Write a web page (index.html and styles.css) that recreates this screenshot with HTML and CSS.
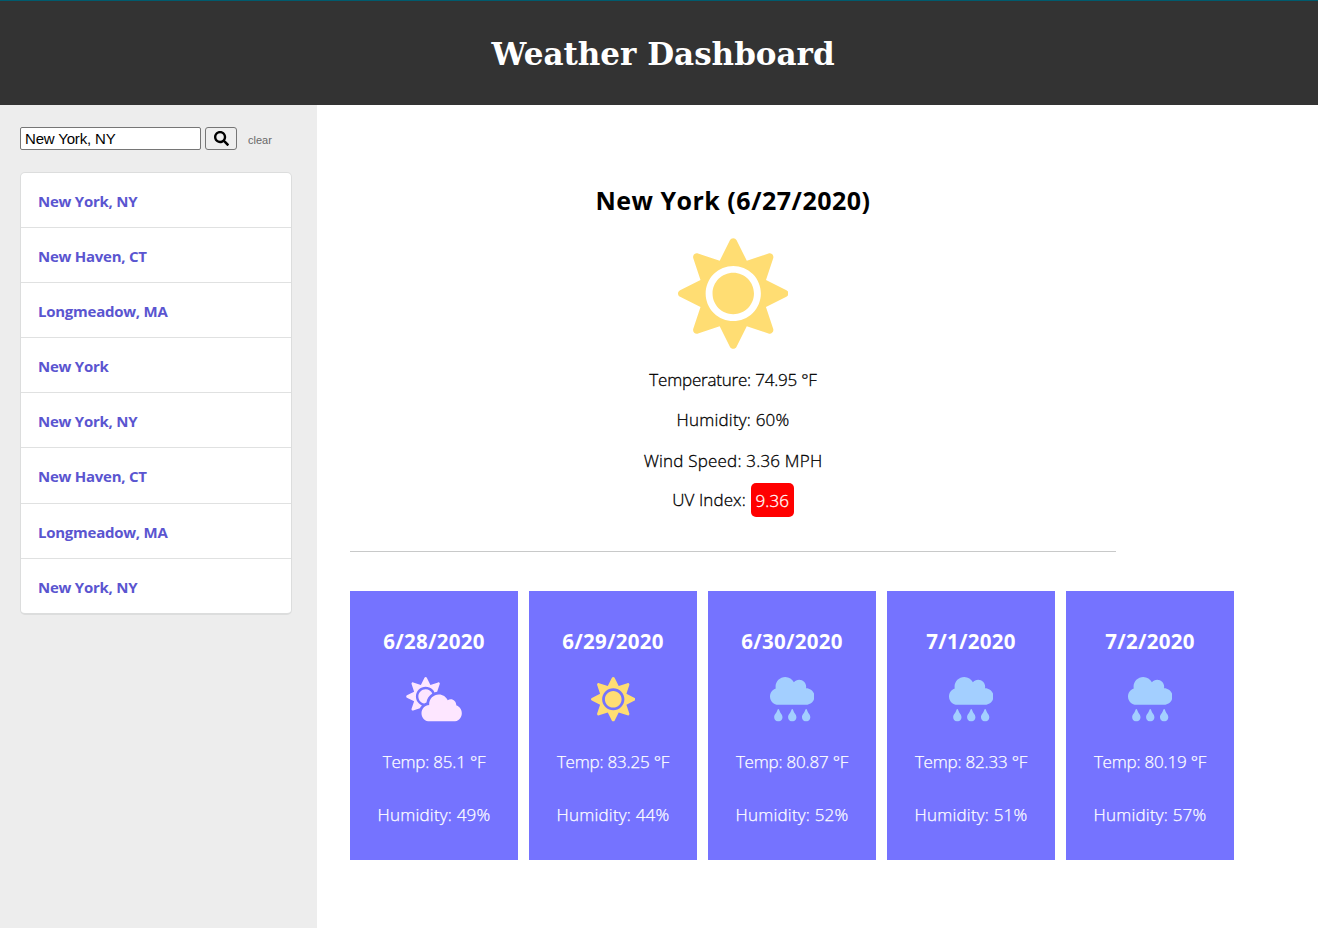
FILE: index.html
```html
<!DOCTYPE html>
<html lang="en">
<head>
<meta charset="utf-8">
<title>Weather Dashboard</title>
<link rel="stylesheet" href="styles.css">
</head>
<body>
<svg class="sprites" aria-hidden="true">
  <symbol id="sun" viewBox="0 0 512 512"><path d="M256 160c-52.9 0-96 43.1-96 96s43.1 96 96 96 96-43.1 96-96-43.1-96-96-96zm246.4 80.5l-94.7-47.3 33.5-100.4c4.5-13.6-8.4-26.5-21.9-21.9l-100.4 33.5-47.4-94.8c-6.4-12.8-24.6-12.8-31 0l-47.3 94.7L92.7 70.8c-13.6-4.5-26.5 8.4-21.9 21.9l33.5 100.4-94.7 47.4c-12.8 6.4-12.8 24.6 0 31l94.7 47.3-33.5 100.5c-4.5 13.6 8.4 26.5 21.9 21.9l100.4-33.5 47.3 94.7c6.4 12.8 24.6 12.8 31 0l47.3-94.7 100.4 33.5c13.6 4.5 26.5-8.4 21.9-21.9l-33.5-100.4 94.7-47.3c13-6.5 13-24.7.2-31.1zm-155.9 106c-49.9 49.9-131.1 49.9-181 0-49.9-49.9-49.9-131.1 0-181 49.9-49.9 131.1-49.9 181 0 49.9 49.9 49.9 131.1 0 181z"/></symbol>
  <symbol id="cloud-sun" viewBox="0 0 640 512"><path d="M575.2 325.7c.2-1.9.8-3.7.8-5.6 0-35.3-28.7-64-64-64-12.6 0-24.2 3.8-34.1 10-17.6-38.8-56.5-66-101.9-66-61.8 0-112 50.1-112 112 0 3 .7 5.8.9 8.7-49.6 3.7-88.9 44.7-88.9 95.3 0 53 43 96 96 96h272c53 0 96-43 96-96 0-42.1-27.2-77.4-64.8-90.4zm-430.4-22.6c-43.7-43.7-43.7-114.7 0-158.3 43.7-43.7 114.7-43.7 158.4 0 9.7 9.7 16.9 20.9 22.3 32.7 9.8-3.7 20.1-6 30.7-7.5L386 81.1c4-11.9-7.3-23.1-19.2-19.2L279 91.2 237.5 8.4C232-2.8 216-2.8 210.4 8.4L169 91.2 81.1 61.9C69.3 58 58 69.3 61.9 81.1l29.3 87.8-82.8 41.5c-11.2 5.6-11.2 21.5 0 27.1l82.8 41.4-29.3 87.8c-4 11.9 7.3 23.1 19.2 19.2l76.1-25.3c6.1-12.4 14-23.7 23.6-33.5-13.1-5.4-25.4-13.4-36-24zm-4.8-79.2c0 40.8 29.3 74.8 67.9 82.3 8-4.7 16.3-8.8 25.2-11.7 5.4-44.3 31-82.5 67.4-105C287.3 160.4 258 140 224 140c-46.3 0-84 37.6-84 83.9z"/></symbol>
  <symbol id="rain" viewBox="0 0 512 512"><path d="M416 128c-.6 0-1.1.2-1.6.2 1.1-5.2 1.6-10.6 1.6-16.2 0-44.2-35.8-80-80-80-24.6 0-46.3 11.3-61 28.8C256.4 24.8 219.3 0 176 0 114.1 0 64 50.1 64 112c0 7.3.8 14.3 2.1 21.2C27.8 145.8 0 181.5 0 224c0 53 43 96 96 96h320c53 0 96-43 96-96s-43-96-96-96zM88 374.2c-12.8 44.4-40 56.4-40 87.7 0 27.7 21.5 50.1 48 50.1s48-22.4 48-50.1c0-31.4-27.2-43.1-40-87.7-2.2-8.1-13.5-8.5-16 0zm160 0c-12.8 44.4-40 56.4-40 87.7 0 27.7 21.5 50.1 48 50.1s48-22.4 48-50.1c0-31.4-27.2-43.1-40-87.7-2.2-8.1-13.5-8.5-16 0zm160 0c-12.8 44.4-40 56.4-40 87.7 0 27.7 21.5 50.1 48 50.1s48-22.4 48-50.1c0-31.4-27.2-43.1-40-87.7-2.2-8.1-13.5-8.5-16 0z"/></symbol>
</svg>
<header class="banner"><h1 class="title">Weather Dashboard</h1></header>
<div class="page">
  <aside class="sidebar">
    <form class="search">
      <input class="field" type="text" value="New York, NY" spellcheck="false">
      <button class="go" type="button"><svg class="glass" viewBox="0 0 512 512"><path d="M505 442.7L405.3 343c-4.500-4.500-10.600-7-17-7H372c27.600-35.300 44-79.700 44-128C416 93.100 322.900 0 208 0S0 93.100 0 208s93.100 208 208 208c48.300 0 92.700-16.400 128-44v16.300c0 6.400 2.500 12.500 7 17l99.700 99.700c9.400 9.400 24.600 9.400 33.900 0l28.300-28.300c9.400-9.400 9.400-24.600.1-34zM208 336c-70.700 0-128-57.200-128-128 0-70.700 57.200-128 128-128 70.700 0 128 57.200 128 128 0 70.700-57.200 128-128 128z"/></svg></button>
      <button class="clear" type="button">clear</button>
    </form>
    <ul class="history">
      <li class="place">New York, NY</li>
      <li class="place">New Haven, CT</li>
      <li class="place">Longmeadow, MA</li>
      <li class="place">New York</li>
      <li class="place">New York, NY</li>
      <li class="place">New Haven, CT</li>
      <li class="place">Longmeadow, MA</li>
      <li class="place">New York, NY</li>
    </ul>
  </aside>
  <main class="content">
    <section class="today">
      <h2 class="city">New York (6/27/2020)</h2>
      <svg class="big-icon"><use href="#sun"/></svg>
      <p class="stat temperature">Temperature: 74.95 °F</p>
      <p class="stat moisture">Humidity: 60%</p>
      <p class="stat wind">Wind Speed: 3.36 MPH</p>
      <p class="stat uv-line"><span>UV Index:</span><span class="uv">9.36</span></p>
    </section>
    <section class="forecast">
      <article class="day"><h3 class="date">6/28/2020</h3><svg class="icon partly"><use href="#cloud-sun"/></svg><p class="temp">Temp: 85.1 °F</p><p class="humidity">Humidity: 49%</p></article>
      <article class="day"><h3 class="date">6/29/2020</h3><svg class="icon sunny"><use href="#sun"/></svg><p class="temp">Temp: 83.25 °F</p><p class="humidity">Humidity: 44%</p></article>
      <article class="day"><h3 class="date">6/30/2020</h3><svg class="icon rainy"><use href="#rain"/></svg><p class="temp">Temp: 80.87 °F</p><p class="humidity">Humidity: 52%</p></article>
      <article class="day"><h3 class="date">7/1/2020</h3><svg class="icon rainy"><use href="#rain"/></svg><p class="temp">Temp: 82.33 °F</p><p class="humidity">Humidity: 51%</p></article>
      <article class="day"><h3 class="date">7/2/2020</h3><svg class="icon rainy"><use href="#rain"/></svg><p class="temp">Temp: 80.19 °F</p><p class="humidity">Humidity: 57%</p></article>
    </section>
  </main>
</div>
</body>
</html>
```
FILE: styles.css
```css
* { box-sizing: border-box; }
body {
  margin: 0;
  height: 928px;
  overflow: hidden;
  display: flex;
  flex-direction: column;
  background: #fff;
  color: #000;
  font-family: "Open Sans", "Noto Sans", sans-serif;
}
h1, h2, h3, p, ul { margin: 0; padding: 0; }
.sprites { display: none; }

.banner {
  height: 105px;
  flex: none;
  border-top: 1px solid #005b6e;
  background: #333;
  display: flex;
  justify-content: center;
  padding: 25px 0 0 8px;
}
.title {
  color: #fff;
  font: bold 31px/56px "DejaVu Serif", serif;
  white-space: nowrap;
}

.page { flex: 1; display: flex; min-height: 0; }
.sidebar { width: 317px; flex: none; background: #ededed; padding: 22px 25px 0 20px; }
.search { display: flex; height: 23px; }
.field {
  width: 181px;
  height: 23px;
  margin: 0 4px 0 0;
  padding: 0 3px 0 4px;
  border: 1px solid #767676;
  border-radius: 2px;
  background: #fff;
  color: #000;
  font: 15px "Liberation Sans", sans-serif;
  letter-spacing: -.17px;
}
.go {
  width: 32px;
  height: 23px;
  padding: 0;
  border: 1px solid #767676;
  border-radius: 3px;
  background: #efefef;
  display: flex;
  align-items: center;
  justify-content: center;
}
.glass { width: 15px; height: 15px; }
.clear {
  margin: 3px 0 0 11px;
  padding: 0;
  border: 0;
  background: none;
  color: #696969;
  font: 11px/18px "Liberation Sans", sans-serif;
}
.history {
  list-style: none;
  margin-top: 22px;
  width: 272px;
  border: 1px solid #dcdddd;
  border-bottom-width: 2px;
  border-radius: 5px;
  background: #fff;
}
.place {
  height: 55.1px;
  padding: 0 0 0 17px;
  border-bottom: 1px solid #e0e1e1;
  color: #5a55d0;
  font-size: 15px;
  font-weight: 700;
  line-height: 56.2px;
  letter-spacing: -.25px;
}
.place:last-child { height: 54.3px; border-bottom: 0; }

.content { padding-left: 33px; flex: 1; }
.today {
  width: 766px;
  height: 447px;
  padding-top: 75px;
  border-bottom: 1px solid #c8c9c9;
  display: flex;
  flex-direction: column;
  align-items: center;
}
.city { font-size: 25px; line-height: 40px; font-weight: 700; letter-spacing: .5px; }
.big-icon { width: 110.5px; height: 111px; margin: 18px 0 11px; fill: #ffdd73; }
.stat { font-size: 17px; font-weight: 300; line-height: 40.4px; white-space: nowrap; -webkit-text-stroke: .3px currentColor; }
.temperature { letter-spacing: -.2px; }
.moisture { letter-spacing: .2px; }
.wind { letter-spacing: .2px; }
.uv-line { display: flex; align-items: center; gap: 5px; height: 38px; letter-spacing: .1px; }
.uv {
  height: 34px;
  width: 43px;
  text-align: center;
  line-height: 36px;
  border-radius: 5px;
  background: #f00;
  color: #fff;
}

.forecast { display: flex; gap: 11px; margin-top: 39px; }
.day {
  width: 168px;
  height: 269px;
  flex: none;
  background: #7573ff;
  color: #fff;
  display: flex;
  flex-direction: column;
  align-items: center;
  padding-top: 30px;
  font-size: 17px;
  font-weight: 300;
}
.date { font-size: 20.5px; font-weight: 700; line-height: 40px; letter-spacing: .3px; }
.icon { width: 44.5px; height: 44.5px; margin: 16px 0 20.5px; }
.partly { width: 56px; fill: #fde6ff; }
.sunny { fill: #ffdd73; }
.rainy { fill: #a3cfff; }
.temp, .humidity { line-height: 40px; white-space: nowrap; -webkit-text-stroke: .25px currentColor; }
.temp { letter-spacing: -.2px; }
.humidity { margin-top: 13px; letter-spacing: .2px; }
```
